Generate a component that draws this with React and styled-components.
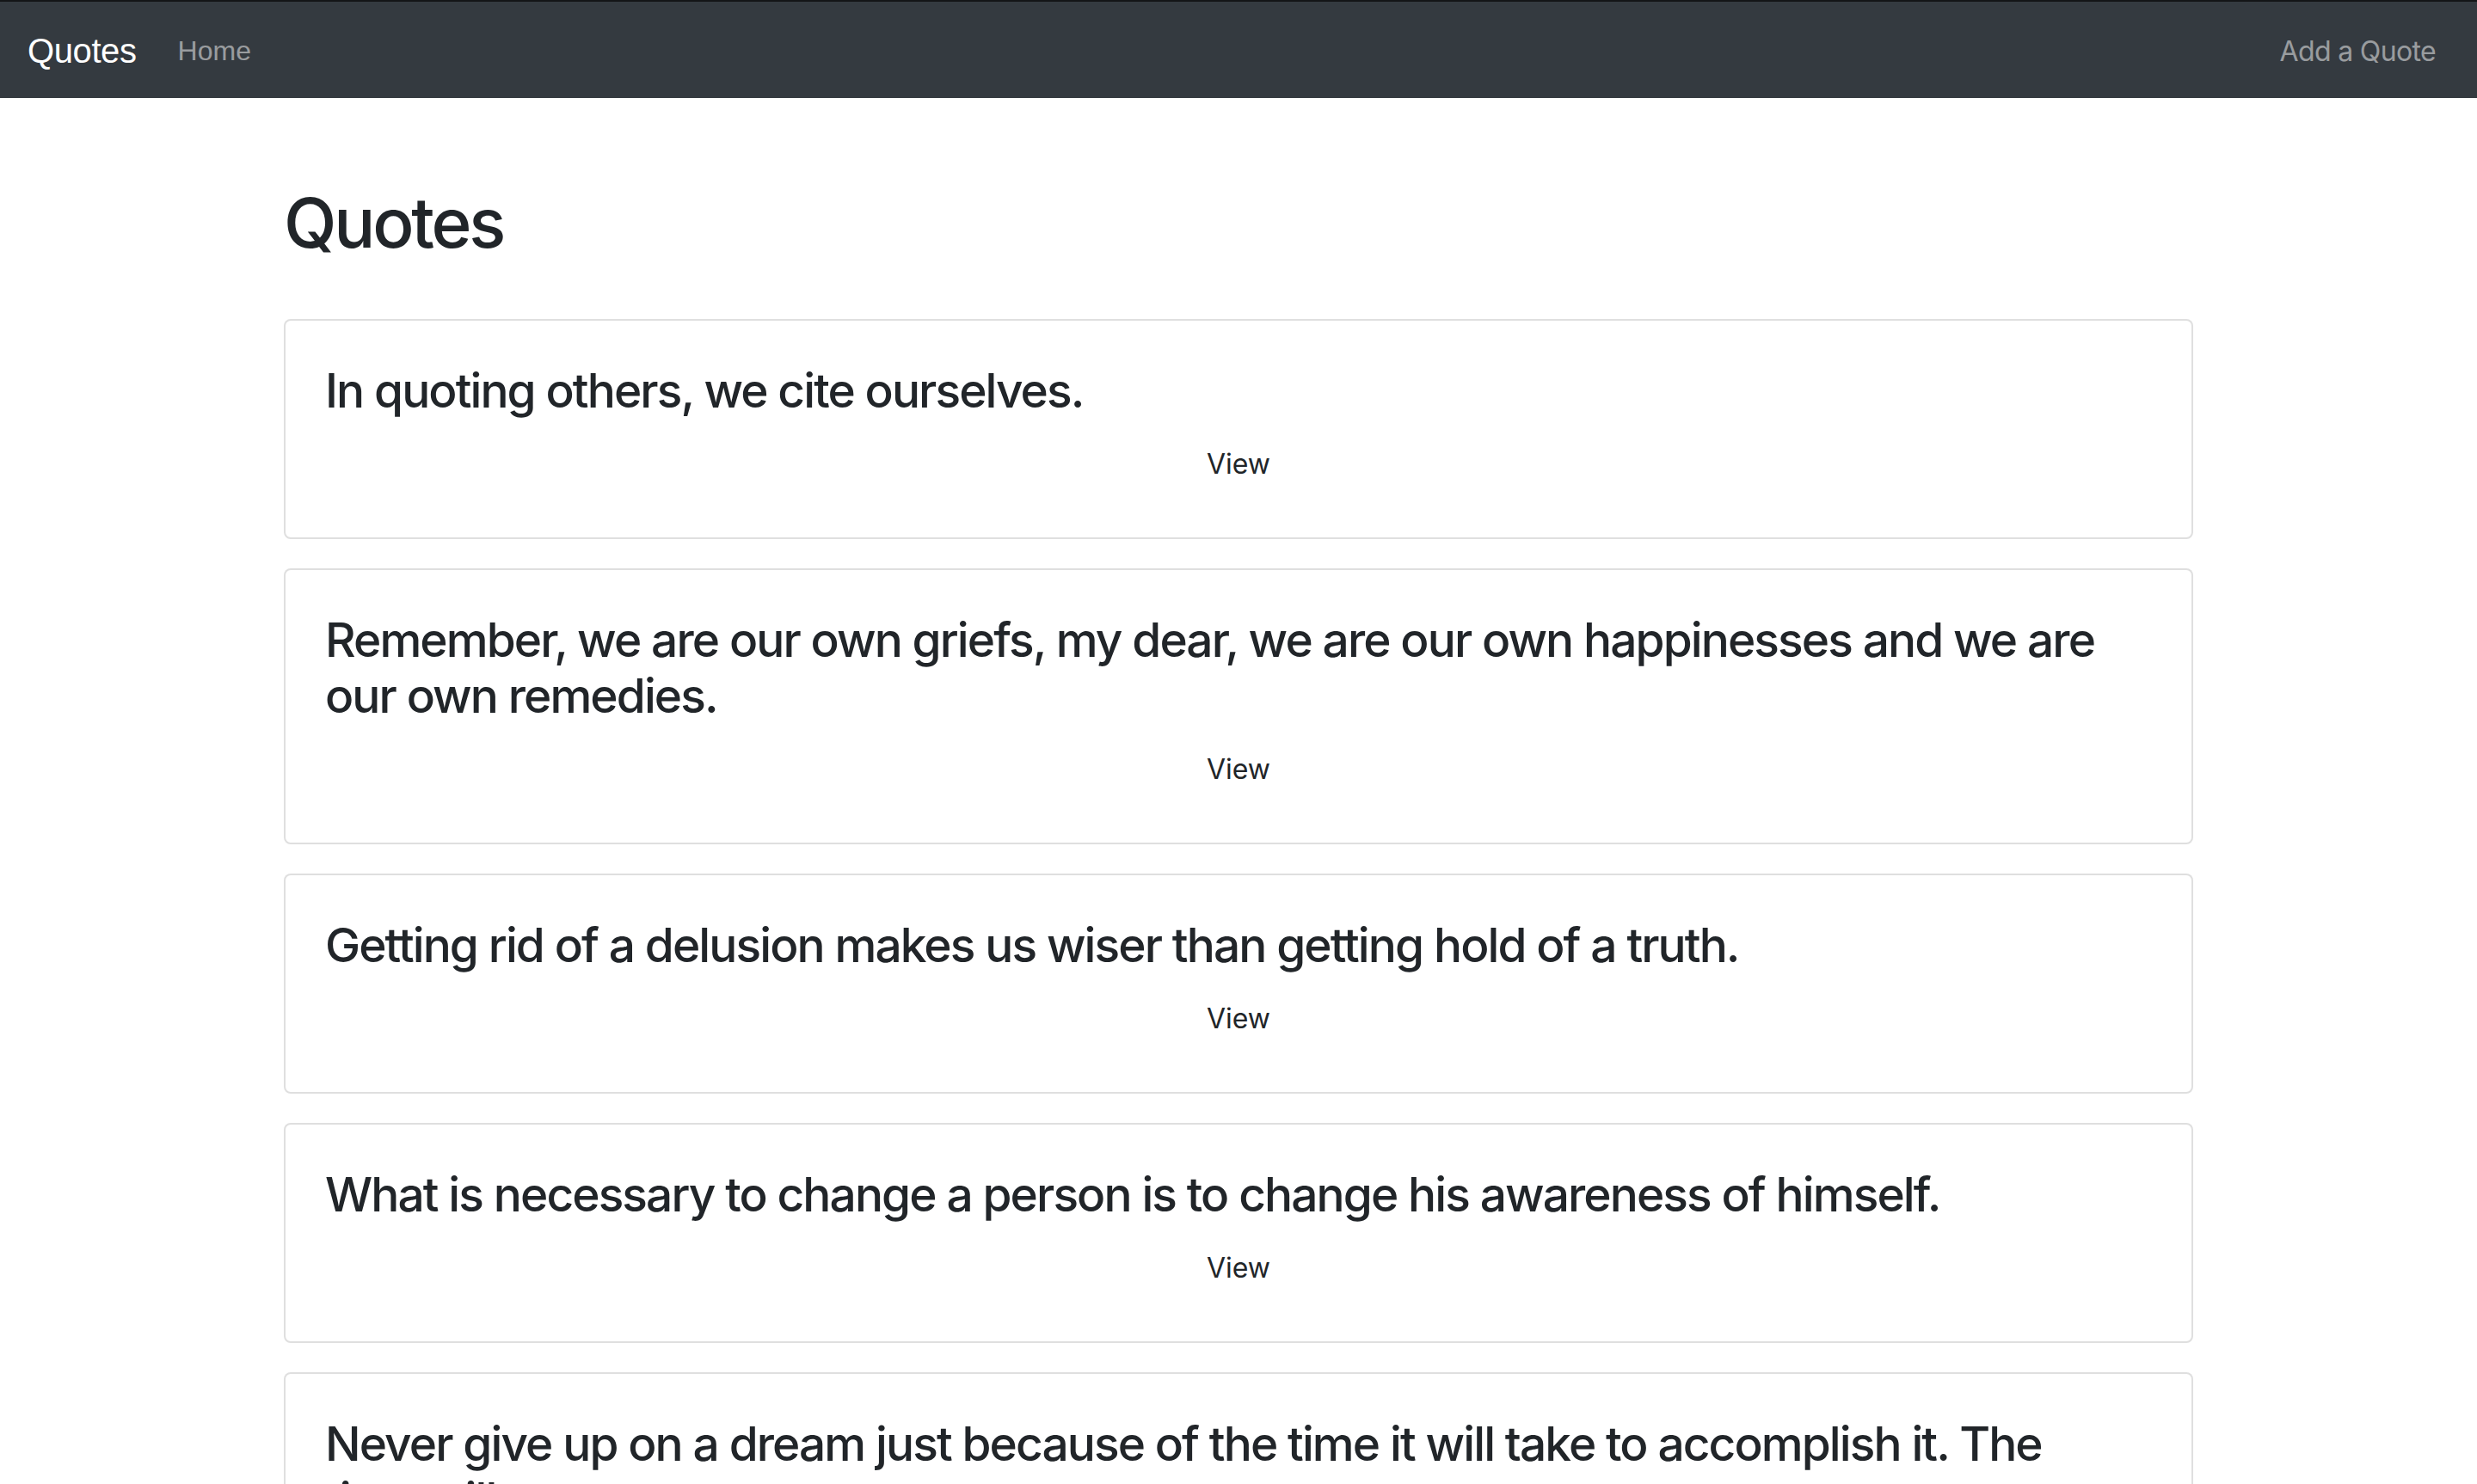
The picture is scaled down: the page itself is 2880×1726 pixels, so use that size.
import React from 'react';
import styled, { createGlobalStyle } from 'styled-components';

const GlobalStyle = createGlobalStyle`
  html, body {
    margin: 0;
    padding: 0;
    background: #fff;
  }
  body {
    font-family: Inter, "Noto Sans", sans-serif;
    color: #212529;
  }
`;

const quotes = [
  'In quoting others, we cite ourselves.',
  'Remember, we are our own griefs, my dear, we are our own happinesses and we are our own remedies.',
  'Getting rid of a delusion makes us wiser than getting hold of a truth.',
  'What is necessary to change a person is to change his awareness of himself.',
  'Never give up on a dream just because of the time it will take to accomplish it. The time will pass anyway.',
];

const Navbar = styled.nav`
  display: flex;
  align-items: center;
  justify-content: space-between;
  height: 112px;
  padding: 0 32px;
  background: #343a40;
  border-top: 2px solid #131517;
`;

const NavLeft = styled.div`
  display: flex;
  align-items: center;
`;

const Brand = styled.a`
  font-family: "Liberation Sans", Arial, sans-serif;
  font-size: 40px;
  letter-spacing: -0.4px;
  color: #fff;
  text-decoration: none;
  margin-right: 32px;
  margin-top: 2px;
`;

const NavLink = styled.a`
  font-family: ${(p) => (p.$helvetica ? '"Liberation Sans", Arial' : 'Inter')}, sans-serif;
  font-size: 32px;
  letter-spacing: ${(p) => (p.$helvetica ? '0' : '-0.65px')};
  color: rgba(255, 255, 255, 0.5);
  text-decoration: none;
  padding: 16px;
  margin-top: 2px;
`;

const Container = styled.main`
  width: 2220px;
  margin: 0 auto;
  padding: 97px 0 40px;
`;

const Title = styled.h1`
  font-size: 80px;
  font-weight: 500;
  line-height: 96px;
  letter-spacing: -3.2px;
  margin: 0 0 64px;
`;

const List = styled.div`
  display: flex;
  flex-direction: column;
  gap: 34px;
`;

const Card = styled.div`
  border: 2px solid rgba(0, 0, 0, 0.125);
  border-radius: 8px;
  padding: 49px 40px 61px 46px;
  background: #fff;
`;

const QuoteText = styled.h3`
  font-size: 55px;
  font-weight: 500;
  line-height: 65px;
  letter-spacing: -1.9px;
  margin: 0 48px 29px 0;
`;

const ViewLink = styled.a`
  display: block;
  text-align: center;
  font-size: 32px;
  line-height: 48px;
  color: #212529;
  text-decoration: none;
  margin-left: -6px;
`;

export default function App() {
  return (
    <>
      <GlobalStyle />
      <Navbar>
        <NavLeft>
          <Brand href="#">Quotes</Brand>
          <NavLink href="#" $helvetica>Home</NavLink>
        </NavLeft>
        <NavLink href="#">Add a Quote</NavLink>
      </Navbar>
      <Container>
        <Title>Quotes</Title>
        <List>
          {quotes.map((q) => (
            <Card key={q}>
              <QuoteText>{q}</QuoteText>
              <ViewLink href="#">View</ViewLink>
            </Card>
          ))}
        </List>
      </Container>
    </>
  );
}
